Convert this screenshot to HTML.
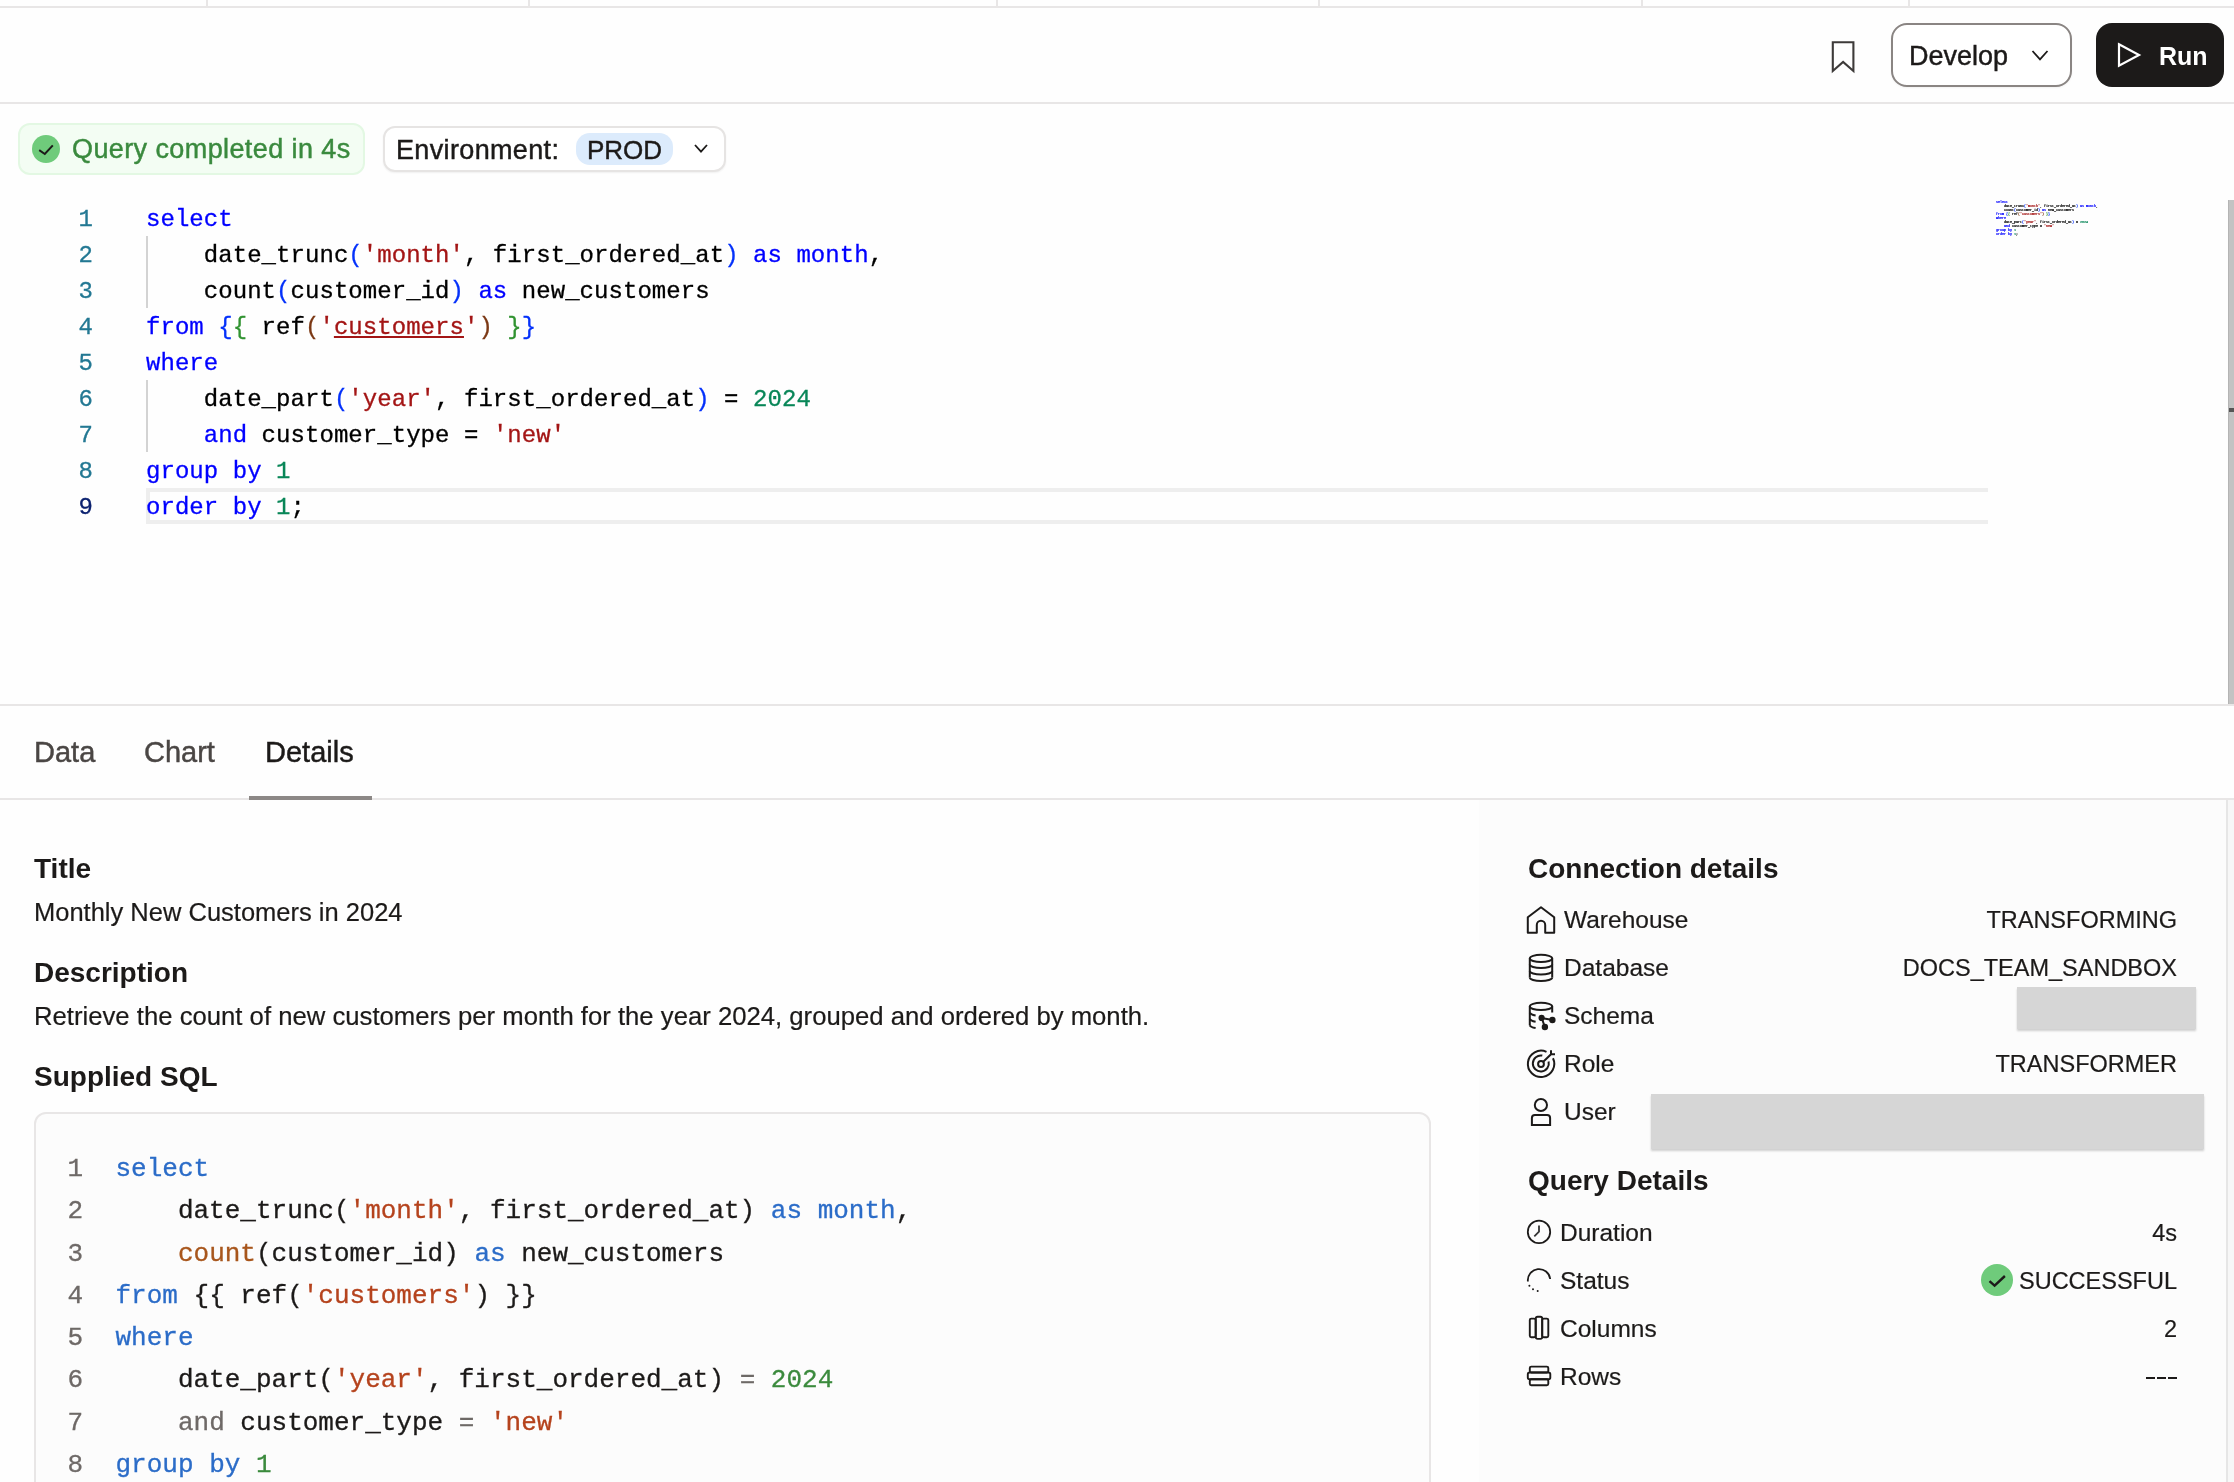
<!DOCTYPE html>
<html><head><meta charset="utf-8">
<style>
*{box-sizing:border-box;margin:0;padding:0}
html,body{width:2234px;height:1482px;overflow:hidden;background:#fefefe;font-family:"Liberation Sans",sans-serif;color:#1c1a19}
.a{position:absolute}
.t{position:absolute;white-space:nowrap;line-height:1}
.hl{position:absolute;background:#e8e6e6}
.mono{font-family:"Liberation Mono",monospace}
/* editor */
.ed{position:absolute;left:0;top:200px;font-family:"Liberation Mono",monospace;font-size:24px;line-height:36px;white-space:pre}
.ln{position:absolute;left:0;width:93px;text-align:right;color:#237893;font-family:"Liberation Mono",monospace;font-size:24px;line-height:36px;transform:translateY(2px);-webkit-text-stroke:0.3px currentColor}
.cl{position:absolute;left:146px;color:#000;font-family:"Liberation Mono",monospace;font-size:24px;line-height:36px;white-space:pre;letter-spacing:0.05px;transform:translateY(2px);-webkit-text-stroke:0.3px currentColor}
.k{color:#0000ff}.s{color:#a31515}.n{color:#098658}.b1{color:#0431fa}.b2{color:#319331}.b3{color:#7b3814}
/* block */
.bln{position:absolute;left:50px;width:33px;text-align:right;color:#6e6967;font-family:"Liberation Mono",monospace;font-size:26px;line-height:42.25px;-webkit-text-stroke:0.3px currentColor}
.bcl{position:absolute;left:115.5px;color:#1c1a19;font-family:"Liberation Mono",monospace;font-size:26px;line-height:42.25px;white-space:pre;-webkit-text-stroke:0.3px currentColor}
.bk{color:#2b6cc8}.bs{color:#b5431d}.bf{color:#a8561c}.bn{color:#3b8a3d}.bg{color:#6e6967}
.row{position:absolute;font-size:24.5px;line-height:24px;white-space:nowrap;-webkit-text-stroke:0.2px currentColor}
.val{position:absolute;right:57px;font-size:23.5px;line-height:24px;white-space:nowrap;text-align:right;-webkit-text-stroke:0.2px currentColor}
#root{position:absolute;left:0;top:0;width:2234px;height:1482px;will-change:transform}
.med{-webkit-text-stroke:0.45px currentColor}
.reg{-webkit-text-stroke:0.2px currentColor}
</style></head><body><div id="root">

<!-- top strip -->
<div class="hl" style="left:0;top:6px;width:2234px;height:2px"></div>
<div class="hl" style="left:206px;top:0;width:2px;height:7px"></div>
<div class="hl" style="left:528px;top:0;width:2px;height:7px"></div>
<div class="hl" style="left:996px;top:0;width:2px;height:7px"></div>
<div class="hl" style="left:1318px;top:0;width:2px;height:7px"></div>
<div class="hl" style="left:1641px;top:0;width:2px;height:7px"></div>
<div class="hl" style="left:1908px;top:0;width:2px;height:7px"></div>

<!-- header -->
<div class="hl" style="left:0;top:102px;width:2234px;height:2px"></div>
<svg class="a" style="left:1826px;top:36px" width="34" height="42" viewBox="0 0 34 42">
 <path d="M6.8 6.2 H27.4 V35 L17.1 26 L6.8 35 Z" fill="none" stroke="#3d3a39" stroke-width="2.1" stroke-linejoin="miter"/>
</svg>
<div class="a" style="left:1891px;top:23px;width:181px;height:64px;border:2px solid #8a8583;border-radius:16px;background:#fff;box-shadow:0 1px 2px rgba(0,0,0,0.05)"></div>
<div class="t med" id="develop" style="left:1909px;top:43px;font-size:27px;color:#1c1a19">Develop</div>
<svg class="a" style="left:2028px;top:46px" width="24" height="18" viewBox="0 0 24 18">
 <path d="M4.5 5 L12 13.3 L19.5 5" fill="none" stroke="#1c1a19" stroke-width="1.8"/>
</svg>
<div class="a" style="left:2096px;top:23px;width:128px;height:64px;border-radius:16px;background:#1c1a19"></div>
<svg class="a" style="left:2112px;top:38px" width="34" height="34" viewBox="0 0 34 34">
 <path d="M7 6.3 L27 17 L7 27.7 Z" fill="none" stroke="#fff" stroke-width="2.2" stroke-linejoin="miter"/>
</svg>
<div class="t" id="run" style="left:2159px;top:44px;font-size:25px;font-weight:700;color:#fff">Run</div>

<!-- status -->
<div class="a" style="left:18px;top:123px;width:347px;height:52px;border:2px solid #e3f8e3;border-radius:12px;background:#f3fdf3"></div>
<svg class="a" style="left:32px;top:135px" width="28" height="28" viewBox="0 0 28 28">
 <circle cx="14" cy="14" r="14" fill="#6fcb7b"/>
 <path d="M7.2 15.2 L12.8 19 L20.8 10.4" fill="none" stroke="#1c1a19" stroke-width="2"/>
</svg>
<div class="t med" id="qc" style="left:72px;top:136px;font-size:27px;letter-spacing:0.4px;color:#3a8a3e">Query completed in 4s</div>

<div class="a" style="left:383px;top:126px;width:343px;height:46px;border:2px solid #e6e4e3;border-radius:12px;background:#fff;box-shadow:0 1px 2px rgba(0,0,0,0.06)"></div>
<div class="t med" id="env" style="left:396px;top:137px;font-size:27px;letter-spacing:0.35px;color:#1c1a19">Environment:</div>
<div class="a" style="left:576px;top:133px;width:97px;height:32px;border-radius:14px;background:#dcebfc"></div>
<div class="t med" id="prod" style="left:587px;top:137px;font-size:26px;color:#1c1a19">PROD</div>
<svg class="a" style="left:690px;top:140px" width="22" height="18" viewBox="0 0 22 18">
 <path d="M5 5 L11 11.6 L17 5" fill="none" stroke="#1c1a19" stroke-width="1.8"/>
</svg>

<!-- editor -->
<div class="ln" style="top:200px">1</div>
<div class="ln" style="top:236px">2</div>
<div class="ln" style="top:272px">3</div>
<div class="ln" style="top:308px">4</div>
<div class="ln" style="top:344px">5</div>
<div class="ln" style="top:380px">6</div>
<div class="ln" style="top:416px">7</div>
<div class="ln" style="top:452px">8</div>
<div class="ln" style="top:488px;color:#0b216f">9</div>

<div class="a" style="left:146px;top:488px;width:1842px;height:36px;border:4px solid #eeeeee;border-right:none"></div>
<div class="a" style="left:146px;top:236px;width:2px;height:72px;background:#d3d3d3"></div>
<div class="a" style="left:146px;top:380px;width:2px;height:72px;background:#d3d3d3"></div>

<div class="cl" style="top:200px"><span class="k">select</span></div>
<div class="cl" style="top:236px">    date_trunc<span class="b1">(</span><span class="s">'month'</span>, first_ordered_at<span class="b1">)</span> <span class="k">as</span> <span class="k">month</span>,</div>
<div class="cl" style="top:272px">    count<span class="b1">(</span>customer_id<span class="b1">)</span> <span class="k">as</span> new_customers</div>
<div class="cl" style="top:308px"><span class="k">from</span> <span class="b1">{</span><span class="b2">{</span> ref<span class="b3">(</span><span class="s">'<u>customers</u>'</span><span class="b3">)</span> <span class="b2">}</span><span class="b1">}</span></div>
<div class="cl" style="top:344px"><span class="k">where</span></div>
<div class="cl" style="top:380px">    date_part<span class="b1">(</span><span class="s">'year'</span>, first_ordered_at<span class="b1">)</span> = <span class="n">2024</span></div>
<div class="cl" style="top:416px">    <span class="k">and</span> customer_type = <span class="s">'new'</span></div>
<div class="cl" style="top:452px"><span class="k">group</span> <span class="k">by</span> <span class="n">1</span></div>
<div class="cl" style="top:488px"><span class="k">order</span> <span class="k">by</span> <span class="n">1</span>;</div>


<!-- minimap -->
<div class="a" style="left:1996px;top:200px;width:1000px;transform-origin:0 0;transform:scale(0.13889,0.1111)">
<div style="font-family:'Liberation Mono',monospace;font-size:24px;line-height:36px;white-space:pre;color:#000;-webkit-text-stroke:1.5px currentColor"><span class="k">select</span>
    date_trunc<span class="b1">(</span><span class="s">'month'</span>, first_ordered_at<span class="b1">)</span> <span class="k">as</span> <span class="k">month</span>,
    count<span class="b1">(</span>customer_id<span class="b1">)</span> <span class="k">as</span> new_customers
<span class="k">from</span> <span class="b1">{</span><span class="b2">{</span> ref<span class="b3">(</span><span class="s">'customers'</span><span class="b3">)</span> <span class="b2">}</span><span class="b1">}</span>
<span class="k">where</span>
    date_part<span class="b1">(</span><span class="s">'year'</span>, first_ordered_at<span class="b1">)</span> = <span class="n">2024</span>
    <span class="k">and</span> customer_type = <span class="s">'new'</span>
<span class="k">group</span> <span class="k">by</span> <span class="n">1</span>
<span class="k">order</span> <span class="k">by</span> <span class="n">1</span>;</div>
</div>

<!-- scrollbar -->
<div class="a" style="left:2228px;top:200px;width:6px;height:504px;background:#c3c3c3;border-left:1px solid #b4b4b4"></div>
<div class="a" style="left:2229px;top:408px;width:5px;height:4px;background:#555"></div>

<!-- tabs -->
<div class="hl" style="left:0;top:704px;width:2234px;height:2px"></div>
<div class="hl" style="left:0;top:798px;width:2234px;height:2px"></div>
<div class="t med" id="tdata" style="left:34px;top:738px;font-size:29px;color:#4a4644">Data</div>
<div class="t med" id="tchart" style="left:144px;top:738px;font-size:29px;color:#4a4644">Chart</div>
<div class="t med" id="tdet" style="left:265px;top:738px;font-size:29px;color:#1c1a19">Details</div>
<div class="a" style="left:249px;top:796px;width:123px;height:4px;background:#8c8886"></div>

<!-- right panel -->
<div class="a" style="left:1479px;top:800px;width:747px;height:682px;background:#fcfcfc"></div>
<div class="a" style="left:2226px;top:800px;width:2px;height:682px;background:#e6e6e6"></div>
<div class="a" style="left:2228px;top:800px;width:6px;height:682px;background:#f7f7f7"></div>

<!-- left details -->
<div class="t" style="left:34px;top:855px;font-size:28px;font-weight:700">Title</div>
<div class="t reg" style="left:34px;top:900px;font-size:25.5px">Monthly New Customers in 2024</div>
<div class="t" style="left:34px;top:959px;font-size:28px;font-weight:700">Description</div>
<div class="t reg" style="left:34px;top:1004px;font-size:25.7px">Retrieve the count of new customers per month for the year 2024, grouped and ordered by month.</div>
<div class="t" style="left:34px;top:1063px;font-size:28px;font-weight:700">Supplied SQL</div>

<div class="a" style="left:34px;top:1112px;width:1397px;height:400px;border:2px solid #e8e6e6;border-radius:12px;background:#fcfcfc"></div>
<div class="bln" style="top:1148px">1</div>
<div class="bln" style="top:1190.25px">2</div>
<div class="bln" style="top:1232.5px">3</div>
<div class="bln" style="top:1274.75px">4</div>
<div class="bln" style="top:1317px">5</div>
<div class="bln" style="top:1359.25px">6</div>
<div class="bln" style="top:1401.5px">7</div>
<div class="bln" style="top:1443.75px">8</div>
<div class="bcl" style="top:1148px"><span class="bk">select</span></div>
<div class="bcl" style="top:1190.25px">    date_trunc(<span class="bs">'month'</span>, first_ordered_at) <span class="bk">as</span> <span class="bk">month</span>,</div>
<div class="bcl" style="top:1232.5px">    <span class="bf">count</span>(customer_id) <span class="bk">as</span> new_customers</div>
<div class="bcl" style="top:1274.75px"><span class="bk">from</span> {{ ref(<span class="bs">'customers'</span>) }}</div>
<div class="bcl" style="top:1317px"><span class="bk">where</span></div>
<div class="bcl" style="top:1359.25px">    date_part(<span class="bs">'year'</span>, first_ordered_at) <span class="bg">=</span> <span class="bn">2024</span></div>
<div class="bcl" style="top:1401.5px">    <span class="bg">and</span> customer_type <span class="bg">=</span> <span class="bs">'new'</span></div>
<div class="bcl" style="top:1443.75px"><span class="bk">group</span> <span class="bk">by</span> <span class="bn">1</span></div>


<!-- right panel content -->
<div class="t" id="cd" style="left:1528px;top:855px;font-size:28px;font-weight:700">Connection details</div>

<svg class="a" style="left:1520px;top:900px" width="40" height="40" viewBox="0 0 40 40" fill="none" stroke="#1c1a19" stroke-width="2" stroke-linejoin="round">
 <path d="M7.8 17.2 L21 7.2 L34.2 17.2 V32.8 H25.2 V25 A4.2 4.2 0 0 0 16.8 25 V32.8 H7.8 Z"/>
</svg>
<div class="row" style="left:1564px;top:908px">Warehouse</div>
<div class="val" style="top:908px">TRANSFORMING</div>

<svg class="a" style="left:1520px;top:948px" width="40" height="40" viewBox="0 0 40 40" fill="none" stroke="#1c1a19" stroke-width="2">
 <ellipse cx="21" cy="10.4" rx="11.2" ry="3.6"/>
 <path d="M9.8 10.4 V29.4 M32.2 10.4 V29.4"/>
 <path d="M9.8 16.4 A11.2 3.6 0 0 0 32.2 16.4"/>
 <path d="M9.8 22.9 A11.2 3.6 0 0 0 32.2 22.9"/>
 <path d="M9.8 29.4 A11.2 3.6 0 0 0 32.2 29.4"/>
</svg>
<div class="row" style="left:1564px;top:956px">Database</div>
<div class="val" style="top:956px">DOCS_TEAM_SANDBOX</div>

<svg class="a" style="left:1520px;top:996px" width="40" height="40" viewBox="0 0 40 40" fill="none" stroke="#1c1a19" stroke-width="2">
 <ellipse cx="21" cy="10.4" rx="11.2" ry="3.6"/>
 <path d="M9.8 10.4 V29.2 M32.2 10.4 V16.6"/>
 <path d="M9.8 16.6 A11.2 3.6 0 0 0 15.6 19.4"/>
 <path d="M9.8 22.9 A11.2 3.6 0 0 0 15.6 25.7"/>
 <path d="M9.8 29.2 A11.2 3.6 0 0 0 15.6 32"/>
 <path d="M21.6 21.9 L32.4 24 M21.6 21.9 L24.9 31" />
 <circle cx="21.6" cy="21.9" r="2.1" fill="#1c1a19"/>
 <circle cx="32.4" cy="24" r="2.2" fill="#1c1a19"/>
 <circle cx="24.9" cy="31" r="2.2" fill="#1c1a19"/>
</svg>
<div class="row" style="left:1564px;top:1004px">Schema</div>
<div class="a" style="left:2017px;top:987px;width:179px;height:42px;background:#d6d6d6;box-shadow:0 2px 2px rgba(0,0,0,0.18)"></div>

<svg class="a" style="left:1520px;top:1044px" width="40" height="40" viewBox="0 0 40 40" fill="none" stroke="#1c1a19" stroke-width="2">
 <path d="M26.5 7.8 A13.2 13.2 0 1 0 33 14.2"/>
 <path d="M22.3 11.6 A8 8 0 1 0 28.6 17.6"/>
 <circle cx="21" cy="20" r="2.9"/>
 <path d="M23 18 L31 10.3 M31 6.2 V10.3 H35"/>
</svg>
<div class="row" style="left:1564px;top:1052px">Role</div>
<div class="val" style="top:1052px">TRANSFORMER</div>

<svg class="a" style="left:1520px;top:1092px" width="40" height="40" viewBox="0 0 40 40" fill="none" stroke="#1c1a19" stroke-width="2">
 <circle cx="20.9" cy="13" r="6.1"/>
 <path d="M11.9 33 V26 Q11.9 23 14.9 23 H27.1 Q30.1 23 30.1 26 V33 Z"/>
</svg>
<div class="row" style="left:1564px;top:1100px">User</div>
<div class="a" style="left:1651px;top:1094px;width:553px;height:55px;background:#d6d6d6;box-shadow:0 2px 2px rgba(0,0,0,0.18)"></div>

<div class="t" id="qd" style="left:1528px;top:1167px;font-size:28px;font-weight:700">Query Details</div>

<svg class="a" style="left:1520px;top:1212px" width="40" height="40" viewBox="0 0 40 40" fill="none" stroke="#1c1a19" stroke-width="1.8">
 <circle cx="19" cy="19.9" r="11.2"/>
 <path d="M19 13.5 V19.7 L14.3 24.3" stroke="#333"/>
</svg>
<div class="row" style="left:1560px;top:1221px">Duration</div>
<div class="val" style="top:1221px">4s</div>

<svg class="a" style="left:1520px;top:1260px" width="40" height="40" viewBox="0 0 40 40" fill="none" stroke="#1c1a19" stroke-width="1.8">
 <path d="M7.9 21.5 A11.2 11.2 0 0 1 30.2 19"/>
 <circle cx="9.4" cy="25.7" r="1" fill="#1c1a19" stroke="none"/>
 <circle cx="13" cy="29.2" r="1" fill="#1c1a19" stroke="none"/>
 <circle cx="17.7" cy="31" r="1" fill="#1c1a19" stroke="none"/>
</svg>
<div class="row" style="left:1560px;top:1269px">Status</div>
<svg class="a" style="left:1981px;top:1264px" width="32" height="32" viewBox="0 0 32 32">
 <circle cx="16" cy="16" r="16" fill="#6fcb7b"/>
 <path d="M8.5 17.2 L13.6 21.6 L23.9 12" fill="none" stroke="#1c1a19" stroke-width="2.4"/>
</svg>
<div class="val" style="top:1269px">SUCCESSFUL</div>

<svg class="a" style="left:1520px;top:1308px" width="40" height="40" viewBox="0 0 40 40" fill="none" stroke="#1c1a19" stroke-width="1.9">
 <rect x="9.8" y="10.6" width="5.8" height="18.6" rx="1.5"/>
 <rect x="22.2" y="10.6" width="6.1" height="18.6" rx="1.5"/>
 <rect x="15.8" y="8.8" width="6.4" height="22.1" rx="1.8"/>
</svg>
<div class="row" style="left:1560px;top:1317px">Columns</div>
<div class="val" style="top:1317px">2</div>

<svg class="a" style="left:1520px;top:1356px" width="40" height="40" viewBox="0 0 40 40" fill="none" stroke="#1c1a19" stroke-width="1.9">
 <rect x="9.8" y="10.6" width="18.5" height="5.9" rx="1.5"/>
 <rect x="9.8" y="23.3" width="18.5" height="5.9" rx="1.5"/>
 <rect x="7.8" y="16.5" width="22.5" height="6.8" rx="1.8"/>
</svg>
<div class="row" style="left:1560px;top:1365px">Rows</div>
<div class="a" style="left:2146px;top:1377px;width:8.5px;height:2px;background:#1c1a19"></div><div class="a" style="left:2157px;top:1377px;width:8.5px;height:2px;background:#1c1a19"></div><div class="a" style="left:2168px;top:1377px;width:8.5px;height:2px;background:#1c1a19"></div>

</div></body></html>
